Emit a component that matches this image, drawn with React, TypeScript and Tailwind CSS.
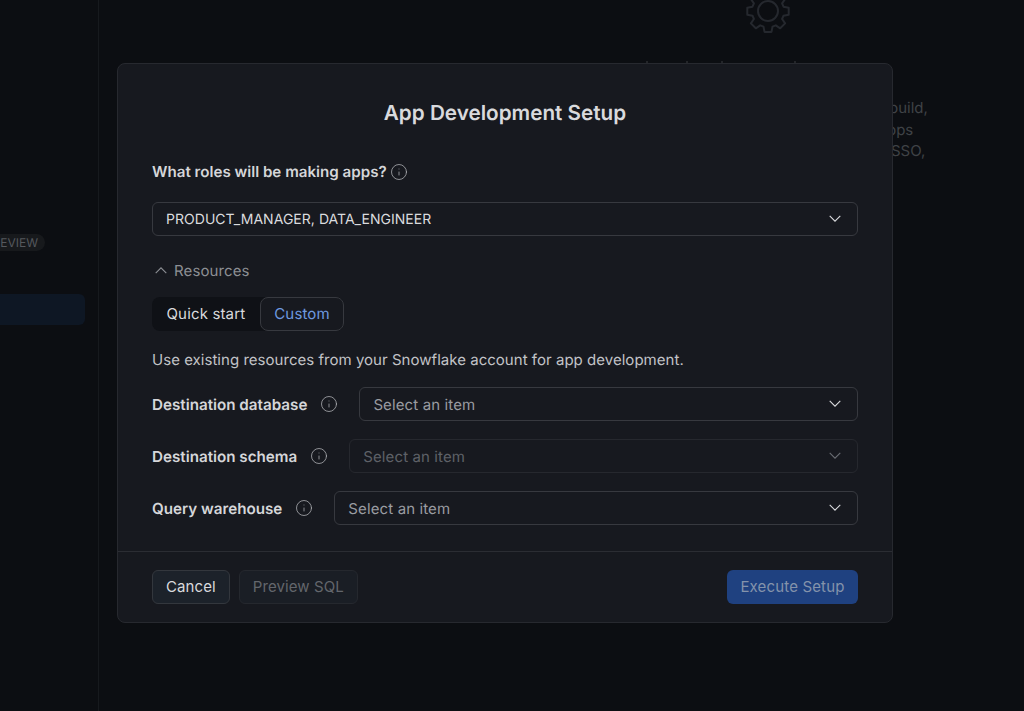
import React from 'react';
import { Info } from 'lucide-react';

const Chevron: React.FC<{ up?: boolean; className?: string }> = ({ up, className }) => (
  <svg width="12" height="7" viewBox="0 0 12 7" fill="none" className={className}>
    <path d={up ? 'M0.7 6.2L6 0.9L11.3 6.2' : 'M0.7 0.8L6 6.1L11.3 0.8'} stroke="currentColor" strokeWidth="1.1" />
  </svg>
);

const Gear = () => (
  <svg width="44" height="44" viewBox="0 0 44 44" fill="none" stroke="#25282e" strokeWidth="2" strokeLinejoin="round">
    <circle cx="22" cy="22" r="10" />
    <path d="M18.5 1.5h7l1 5.2 3.3 1.4 4.4-3 4.9 4.9-3 4.4 1.4 3.3 5.2 1v7l-5.2 1-1.4 3.3 3 4.4-4.9 4.9-4.4-3-3.3 1.4-1 5.2h-7l-1-5.2-3.3-1.4-4.4 3-4.9-4.9 3-4.4-1.4-3.3-5.2-1v-7l5.2-1 1.4-3.3-3-4.4 4.9-4.9 4.4 3 3.3-1.4z" />
  </svg>
);

const Select: React.FC<{ label: string; disabled?: boolean }> = ({ label, disabled }) => (
  <div className={`flex h-[34px] min-w-0 flex-1 items-center justify-between rounded-md border pl-[13px] pr-4 ${disabled ? 'border-[#26282e] text-[#5e6167]' : 'border-[#37393f] text-[#9a9ca1]'}`}>
    <span className="pt-[3px] tracking-[0.12px]">{label}</span>
    <Chevron className={disabled ? 'text-[#6a6d73]' : 'text-[#dadbde]'} />
  </div>
);

const FieldRow: React.FC<{ label: string; disabled?: boolean }> = ({ label, disabled }) => (
  <div className="flex items-center">
    <span className="pt-[3px] text-[15.2px] font-semibold text-[#d5d6d9]">{label}</span>
    <Info size={18} strokeWidth={1} className="ml-[13px] mr-[21px] shrink-0 text-[#b4b6ba]" />
    <Select label="Select an item" disabled={disabled} />
  </div>
);

export default function App() {
  return (
    <div className="relative flex h-[711px] w-[1024px] overflow-hidden bg-[#0c0e12] font-['Inter',sans-serif] text-[15px] text-[#d5d6d9] antialiased [text-rendering:geometricPrecision]">
      <aside className="flex w-[99px] shrink-0 flex-col border-r border-[#171a1e] pr-[13px] pt-[234px]">
        <div className="w-[45px] rounded-r-full bg-[#17191c] pr-[7px] text-right text-[12px] leading-[17px] text-[#55585d]">EVIEW</div>
        <div className="mt-[43px] h-[31px] rounded-r-md bg-[#0e1724]" />
      </aside>
      <main className="relative flex-1">
        <div className="absolute left-[647px] top-[-11px]">
          <Gear />
        </div>
        <div className="absolute left-[547px] top-[61px] flex gap-[38px]">
          <span className="h-[2px] w-[2px] bg-[#232529]" />
          <span className="h-[2px] w-[2px] bg-[#232529]" />
          <span className="ml-[-5px] h-[2px] w-[2px] bg-[#232529]" />
          <span className="ml-[33px] h-[2px] w-[2px] bg-[#232529]" />
        </div>
        <div className="absolute left-[780px] top-[97px] flex flex-col text-[#3f4246] leading-[21.5px]">
          <span className="ml-[10px]">build,</span>
          <span className="ml-[8px]">pps</span>
          <span className="ml-[12px]">SSO,</span>
        </div>
      </main>

      <div className="absolute left-[117px] top-[63px] flex h-[560px] w-[776px] flex-col rounded-lg border border-[#27292f] bg-[#17191f]">
        <h2 className="pt-[33px] text-center text-[20.7px] font-semibold leading-[32px] text-[#d9dadd]">App Development Setup</h2>
        <div className="flex flex-1 flex-col px-[34px]">
          <div className="mt-[32px] flex items-center gap-[3px]">
            <span className="text-[15.15px] font-semibold">What roles will be making apps?</span>
            <Info size={18} strokeWidth={1} className="text-[#b4b6ba]" />
          </div>
          <div className="mt-[18px] flex h-[34px] items-center justify-between rounded-md border border-[#37393f] pl-[13px] pr-4 text-[14px] text-[#dadbde]">
            <span className="pt-[2px] tracking-[0.03px]">PRODUCT_MANAGER, DATA_ENGINEER</span>
            <Chevron className="text-[#dadbde]" />
          </div>
          <div className="mt-[24px] flex items-center gap-[7px] text-[#8d8f94]">
            <Chevron up className="ml-[3px] text-[#8d8f94]" />
            <span className="tracking-[0.1px]">Resources</span>
          </div>
          <div className="mt-[15px] flex h-[34px] w-fit rounded-lg bg-[#0f1116] tracking-[0.15px]">
            <div className="flex items-center px-[14.5px] text-[#d9dadd]">Quick start</div>
            <div className="flex items-center rounded-lg border border-[#37393f] bg-[#17191f] px-[13.5px] text-[#6e9ae0]">Custom</div>
          </div>
          <p className="mt-[18px] tracking-[0.03px] text-[#c2c3c7]">Use existing resources from your Snowflake account for app development.</p>
          <div className="mt-[15px] flex flex-col gap-[18px]">
            <FieldRow label="Destination database" />
            <FieldRow label="Destination schema" disabled />
            <FieldRow label="Query warehouse" />
          </div>
        </div>
        <footer className="flex h-[71px] items-center justify-between border-t border-[#2b2d33] px-[34px] tracking-[0.1px]">
          <div className="flex gap-[9px]">
            <button className="h-[34px] rounded-md border border-[#33373d] bg-[#1c222a] px-[13px] text-[#d9dadd]">Cancel</button>
            <button className="h-[34px] rounded-md border border-[#25282e] bg-[#1a1e25] px-[13px] text-[#63666c]">Preview SQL</button>
          </div>
          <button className="h-[34px] rounded-md bg-[#1f4180] px-[13.5px] tracking-[0.15px] text-[#8493ab]">Execute Setup</button>
        </footer>
      </div>
    </div>
  );
}
